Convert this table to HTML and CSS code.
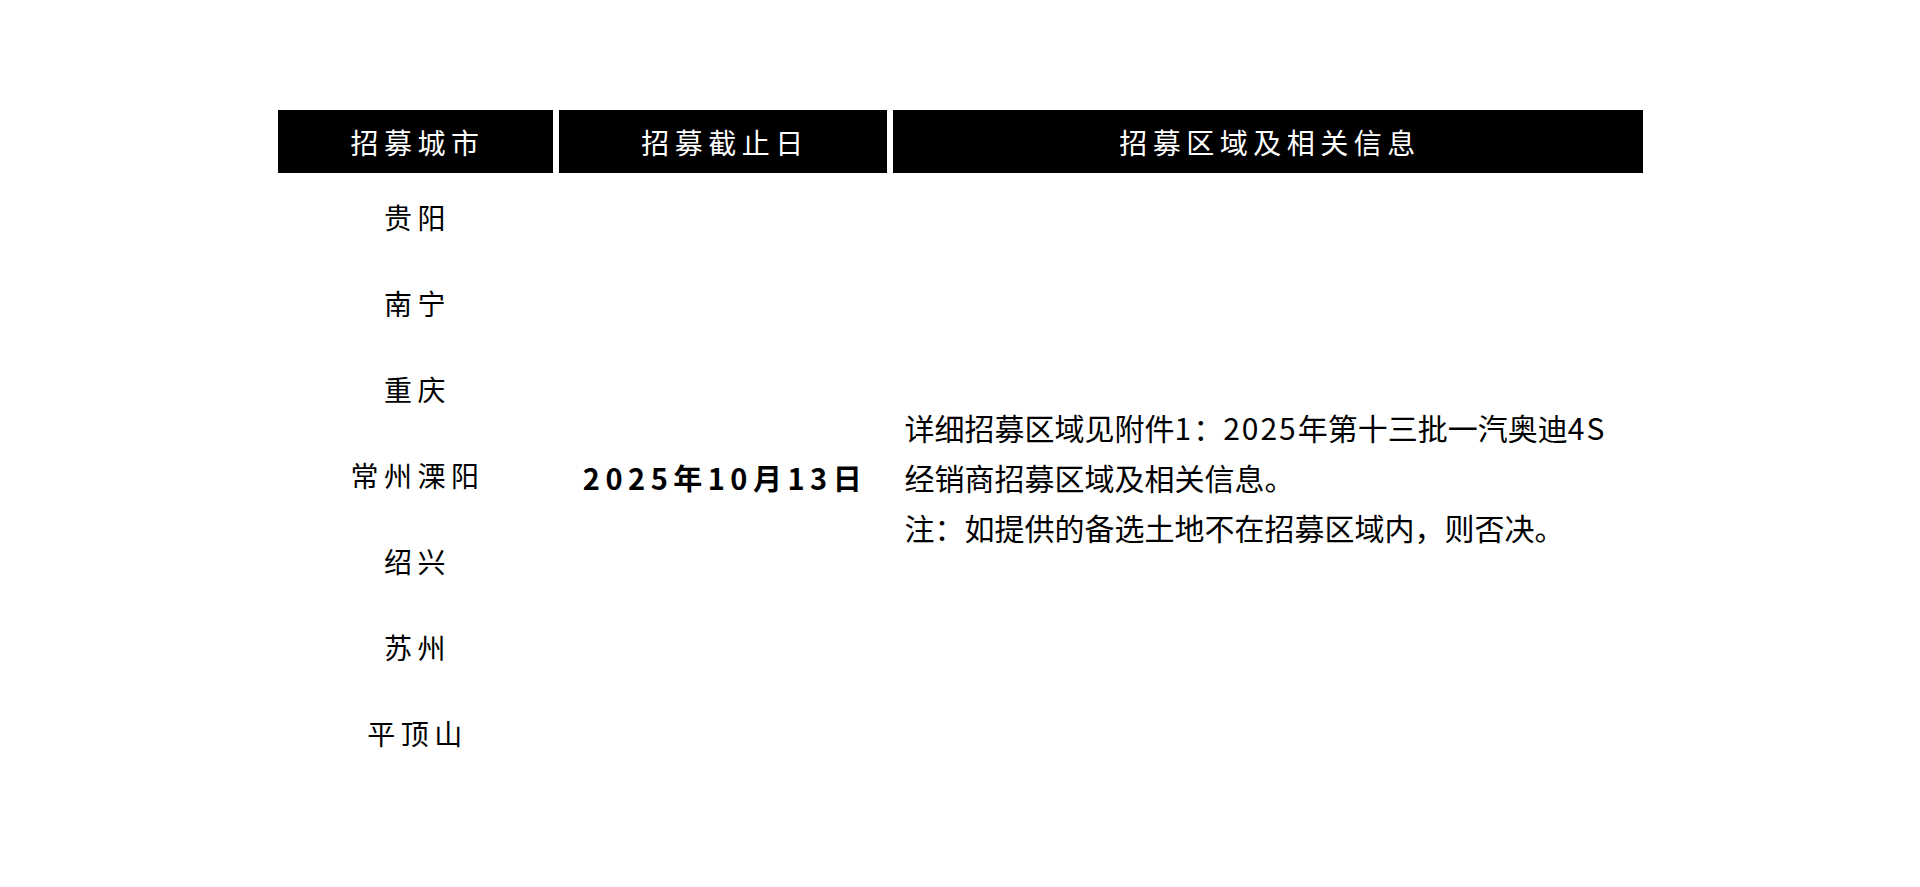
FILE: index.html
```html
<!DOCTYPE html>
<html lang="zh-CN">
<head>
<meta charset="utf-8">
<title>招募区域</title>
<link rel="stylesheet" href="styles.css">
</head>
<body>
<main class="page">
  <table class="recruit">
    <colgroup>
      <col class="col-city">
      <col class="col-date">
      <col class="col-info">
    </colgroup>
    <thead>
      <tr>
        <th>招募城市</th>
        <th>招募截止日</th>
        <th>招募区域及相关信息</th>
      </tr>
    </thead>
    <tbody>
      <tr>
        <td class="city">贵阳</td>
        <td class="date" rowspan="7">2025年10月13日</td>
        <td class="info" rowspan="7">
          <p>详细招募区域见附件<span class="num">1</span>：<span class="num">2025</span>年第十三批一汽奥迪<span class="num">4S</span><br>经销商招募区域及相关信息。</p>
          <p>注：如提供的备选土地不在招募区域内，则否决。</p>
        </td>
      </tr>
      <tr><td class="city">南宁</td></tr>
      <tr><td class="city">重庆</td></tr>
      <tr><td class="city">常州溧阳</td></tr>
      <tr><td class="city">绍兴</td></tr>
      <tr><td class="city">苏州</td></tr>
      <tr><td class="city">平顶山</td></tr>
    </tbody>
  </table>
</main>
</body>
</html>
```

FILE: styles.css
```css
html, body {
  margin: 0;
  padding: 0;
  background: #ffffff;
}

body {
  font-family: "Noto Sans CJK SC", "Noto Sans", sans-serif;
  color: #000000;
}

.page {
  padding-top: 104px;
}

.recruit {
  margin: 0 auto;
  border-collapse: separate;
  border-spacing: 6px;
  table-layout: fixed;
  width: 1377px;
}

.col-city { width: 275px; }
.col-date { width: 328px; }
.col-info { width: 750px; }

.recruit th {
  background: #000000;
  color: #ffffff;
  height: 63px;
  padding: 0 0 0 5px;
  font-size: 28px;
  font-weight: 400;
  letter-spacing: 5.5px;
  text-align: center;
  vertical-align: middle;
  line-height: 1;
}

.recruit td {
  padding: 0;
}

.city {
  height: 75px;
  text-align: center;
  font-size: 28px;
  letter-spacing: 5.5px;
  padding: 0 0 5px 5px !important;
  vertical-align: middle;
  line-height: 1;
}

.date {
  text-align: center;
  vertical-align: middle;
  font-size: 29px;
  font-weight: 700;
  letter-spacing: 5.5px;
  padding-left: 5px !important;
}

.info {
  vertical-align: middle;
  text-align: left;
  padding-left: 12px !important;
  font-size: 30px;
  line-height: 50px;
}

.info p {
  margin: 0;
}

.info .num {
  letter-spacing: 2px;
}
```
